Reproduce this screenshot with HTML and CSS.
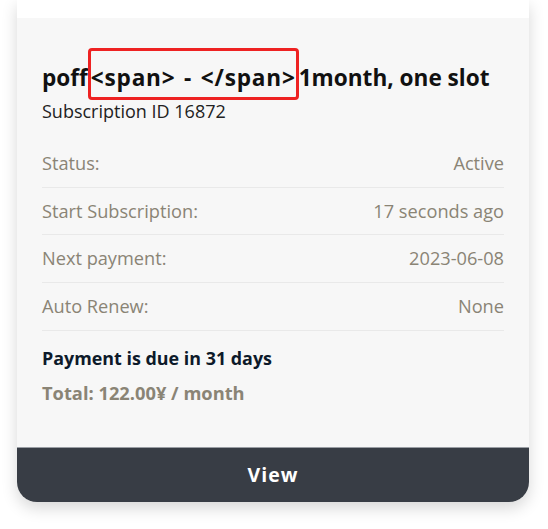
FILE: index.html
```html
<!DOCTYPE html>
<html>
<head>
<meta charset="utf-8">
<link rel="stylesheet" href="styles.css">
</head>
<body>
<div class="card">
  <div class="card-top"></div>
  <div class="card-body">
    <h2 class="title">poff<span class="marked">&lt;span&gt; - &lt;/span&gt;</span>1month, one slot</h2>
    <div class="subtitle">Subscription ID 16872</div>
    <ul class="rows">
      <li class="row"><span>Status:</span><span>Active</span></li>
      <li class="row"><span>Start Subscription:</span><span>17 seconds ago</span></li>
      <li class="row"><span>Next payment:</span><span>2023-06-08</span></li>
      <li class="row"><span>Auto Renew:</span><span>None</span></li>
    </ul>
    <div class="due">Payment is due in 31 days</div>
    <div class="total">Total: 122.00¥ / month</div>
  </div>
  <div class="view">View</div>
</div>
</body>
</html>
```

FILE: styles.css
```css
html, body {
  margin: 0;
  padding: 0;
  background: #ffffff;
}
body {
  font-family: "Open Sans", "Noto Sans", sans-serif;
  width: 548px;
  height: 529px;
  overflow: hidden;
}
.card {
  margin-left: 17px;
  width: 512px;
  border-radius: 0 0 20px 20px;
  box-shadow: 0 6px 16px rgba(0, 0, 0, 0.16);
  overflow: hidden;
}
.card-top {
  height: 18px;
  background: #ffffff;
}
.card-body {
  background: #f7f7f7;
  padding: 45px 25px 42px 25px;
}
.title {
  margin: 0;
  font-size: 22.6px;
  line-height: 30px;
  font-weight: 700;
  color: #111111;
  white-space: nowrap;
}
.marked {
  position: relative;
  display: inline-block;
  margin: 0 3px;
  letter-spacing: 0.8px;
  word-spacing: 2px;
}
.marked::after {
  content: "";
  position: absolute;
  left: -3px;
  right: -3px;
  top: -15px;
  bottom: -7px;
  border: 3px solid #ee2222;
  border-radius: 4px;
}
.subtitle {
  margin-top: 7px;
  font-size: 18px;
  line-height: 22px;
  color: #222222;
}
.rows {
  list-style: none;
  margin: 18px 0 0 0;
  padding: 0;
}
.row {
  display: flex;
  justify-content: space-between;
  padding: 12px 0;
  line-height: 22.67px;
  font-size: 18.2px;
  color: #8a8475;
  border-bottom: 1px solid #e9e9e9;
}
.due {
  margin-top: 15px;
  font-size: 17.9px;
  line-height: 24px;
  font-weight: 700;
  color: #0d1a2a;
}
.total {
  margin-top: 11px;
  font-size: 18.3px;
  line-height: 24px;
  font-weight: 700;
  color: #8a8475;
}
.view {
  height: 55px;
  box-sizing: border-box;
  border-top: 1px solid #9a9ea4;
  background: #383d45;
  color: #ffffff;
  font-size: 19.5px;
  font-weight: 700;
  letter-spacing: 1px;
  display: flex;
  align-items: center;
  justify-content: center;
}
```
